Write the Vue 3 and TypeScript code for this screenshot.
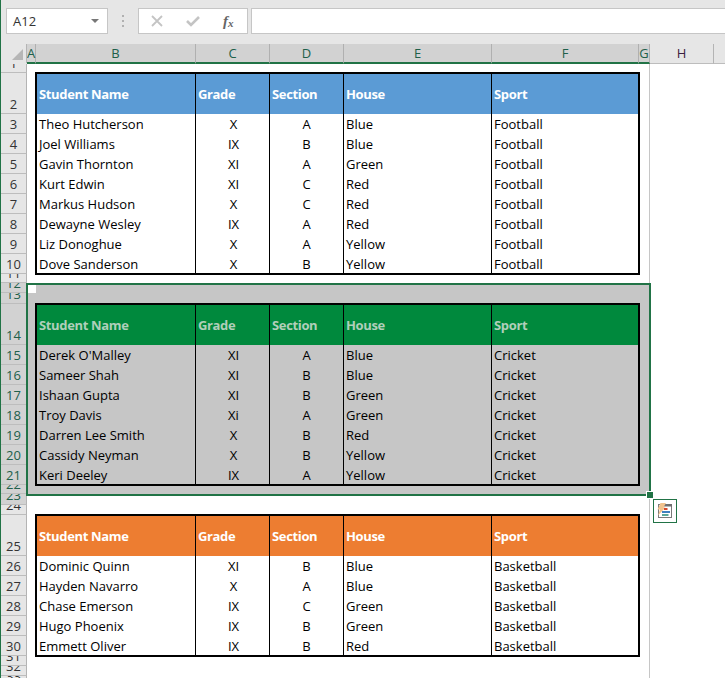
<script setup lang="ts">
interface Row { name: string; grade: string; section: string; house: string; sport: string }
const mk = (sport: string, rows: string[][]): Row[] =>
  rows.map(([name, grade, section, house]) => ({ name, grade, section, house, sport }))

const football = mk('Football', [
  ['Theo Hutcherson', 'X', 'A', 'Blue'],
  ['Joel Williams', 'IX', 'B', 'Blue'],
  ['Gavin Thornton', 'XI', 'A', 'Green'],
  ['Kurt Edwin', 'XI', 'C', 'Red'],
  ['Markus Hudson', 'X', 'C', 'Red'],
  ['Dewayne Wesley', 'IX', 'A', 'Red'],
  ['Liz Donoghue', 'X', 'A', 'Yellow'],
  ['Dove Sanderson', 'X', 'B', 'Yellow'],
])
const cricket = mk('Cricket', [
  ["Derek O'Malley", 'XI', 'A', 'Blue'],
  ['Sameer Shah', 'XI', 'B', 'Blue'],
  ['Ishaan Gupta', 'XI', 'B', 'Green'],
  ['Troy Davis', 'Xi', 'A', 'Green'],
  ['Darren Lee Smith', 'X', 'B', 'Red'],
  ['Cassidy Neyman', 'X', 'B', 'Yellow'],
  ['Keri Deeley', 'IX', 'A', 'Yellow'],
])
const basketball = mk('Basketball', [
  ['Dominic Quinn', 'XI', 'B', 'Blue'],
  ['Hayden Navarro', 'X', 'A', 'Blue'],
  ['Chase Emerson', 'IX', 'C', 'Green'],
  ['Hugo Phoenix', 'IX', 'B', 'Green'],
  ['Emmett Oliver', 'IX', 'B', 'Red'],
])
const headers = ['Student Name', 'Grade', 'Section', 'House', 'Sport']

const rowHeights: [number, number][] = [
  [1, 9], [2, 41], [3, 20], [4, 20], [5, 20], [6, 20], [7, 20], [8, 20], [9, 20], [10, 20],
  [11, 9], [12, 10], [13, 11], [14, 41], [15, 20], [16, 20], [17, 20], [18, 20], [19, 20], [20, 20], [21, 20],
  [22, 9], [23, 11], [24, 10], [25, 41], [26, 20], [27, 20], [28, 20], [29, 20], [30, 20],
  [31, 10], [32, 10], [33, 10],
]
const columns = [
  { l: 'A', w: 9, on: true }, { l: 'B', w: 160, on: true }, { l: 'C', w: 74, on: true },
  { l: 'D', w: 74, on: true }, { l: 'E', w: 148, on: true }, { l: 'F', w: 147, on: true },
  { l: 'G', w: 11, on: true }, { l: 'H', w: 64, on: false }, { l: '', w: 20, on: false },
]
const isSel = (n: number) => n >= 12 && n <= 23
</script>

<template>
  <div class="app">
    <div class="toolbar">
      <div class="namebox"><span>A12</span><i class="caret"></i></div>
      <div class="grip"><b></b><b></b><b></b></div>
      <div class="fxbtns">
        <svg width="12" height="12" viewBox="0 0 12 12"><path d="M1 1 L11 11 M11 1 L1 11" stroke="#c4c4c4" stroke-width="1.8" fill="none"/></svg>
        <svg width="14" height="12" viewBox="0 0 14 12"><path d="M1 6 L5 10 L13 2" stroke="#c4c4c4" stroke-width="2.6" fill="none"/></svg>
        <span class="fx">f<sub>x</sub></span>
      </div>
      <div class="formula"></div>
    </div>
    <div class="colhead">
      <div class="corner"><i></i></div>
      <div v-for="c in columns" :key="c.l" class="col" :class="{ on: c.on }" :style="{ width: c.w + 'px' }">{{ c.l }}</div>
    </div>
    <div class="body">
      <div class="rowhead">
        <div v-for="[n, h] in rowHeights" :key="n" class="rh" :class="{ sel: isSel(n) }" :style="{ height: h + 'px' }">{{ n }}</div>
      </div>
      <div class="sheet">
        <section class="zone zone-top">
          <div class="tbl block-blue">
            <div class="tr head"><span v-for="h in headers" :key="h">{{ h }}</span></div>
            <div v-for="r in football" :key="r.name" class="tr"><span>{{ r.name }}</span><span class="c">{{ r.grade }}</span><span class="c">{{ r.section }}</span><span>{{ r.house }}</span><span>{{ r.sport }}</span></div>
          </div>
        </section>
        <section class="zone zone-sel">
          <i class="active"></i>
          <div class="tbl block-green">
            <div class="tr head"><span v-for="h in headers" :key="h">{{ h }}</span></div>
            <div v-for="r in cricket" :key="r.name" class="tr"><span>{{ r.name }}</span><span class="c">{{ r.grade }}</span><span class="c">{{ r.section }}</span><span>{{ r.house }}</span><span>{{ r.sport }}</span></div>
          </div>
          <i class="handle"></i>
          <div class="flash">
            <svg width="22" height="22" viewBox="654 500 22 22">
              <rect x="658.5" y="504.5" width="13" height="13" fill="#fff" stroke="#7a7a7a" stroke-width="1"/>
              <rect x="662" y="504" width="10" height="2.5" fill="#6f6f6f"/>
              <path d="M660.5 503 H666 L663.5 507.5 H665.5 L658 515.5 L660 509.5 H657.5 Z" fill="#f2c28c"/>
              <rect x="664" y="508" width="3.5" height="2" fill="#d8492c"/>
              <rect x="662" y="511" width="8" height="2" fill="#3f7fc0"/>
              <rect x="662" y="514" width="6.5" height="2" fill="#5aa79a"/>
            </svg>
          </div>
        </section>
        <section class="zone zone-bot">
          <div class="tbl block-orange">
            <div class="tr head"><span v-for="h in headers" :key="h">{{ h }}</span></div>
            <div v-for="r in basketball" :key="r.name" class="tr"><span>{{ r.name }}</span><span class="c">{{ r.grade }}</span><span class="c">{{ r.section }}</span><span>{{ r.house }}</span><span>{{ r.sport }}</span></div>
          </div>
        </section>
      </div>
    </div>
  </div>
</template>

<style>
html, body { margin: 0; background: #fff; overflow: hidden; }
</style>

<style scoped>
.app {
  width: 725px;
  height: 678px;
  overflow: hidden;
  box-sizing: border-box;
  border-left: 1px solid #217346;
  font-family: "Open Sans", "Noto Sans", sans-serif;
  color: #000;
  background: #fff;
}
.toolbar {
  height: 44px;
  box-sizing: border-box;
  background: #e6e6e6;
  display: flex;
  align-items: flex-start;
  padding-top: 8px;
  padding-left: 5px;
}
.namebox {
  width: 102px;
  height: 26px;
  box-sizing: border-box;
  background: #fff;
  border: 1px solid #c6c6c6;
  display: flex;
  align-items: center;
  justify-content: space-between;
  padding: 0 8px 0 6px;
  font-size: 13px;
  color: #333;
}
.caret { width: 0; height: 0; border-left: 4px solid transparent; border-right: 4px solid transparent; border-top: 4px solid #777; }
.grip { width: 30px; display: flex; flex-direction: column; align-items: center; gap: 3px; padding-top: 7px; }
.grip b { width: 2px; height: 2px; background: #b0b0b0; display: block; }
.fxbtns {
  width: 110px;
  height: 26px;
  box-sizing: border-box;
  background: #fff;
  border: 1px solid #c6c6c6;
  display: flex;
  align-items: center;
  gap: 23px;
  padding-left: 12px;
}
.fx { font-family: "Liberation Serif", serif; font-style: italic; font-size: 15px; font-weight: bold; color: #666; }
.fx sub { font-size: 11px; vertical-align: -1px; line-height: 0; }
.formula {
  flex: 1;
  height: 26px;
  margin-left: 3px;
  box-sizing: border-box;
  background: #fff;
  border: 1px solid #c6c6c6;
  border-right: 0;
}
.colhead {
  height: 20px;
  box-sizing: border-box;
  display: flex;
  background: #e6e6e6;
}
.corner {
  width: 26px;
  flex: none;
  height: 19px;
  position: relative;
  box-sizing: border-box;
  border-right: 1px solid #b4b4b4;
}
.corner i {
  position: absolute;
  right: 3px;
  bottom: 3px;
  border-left: 11px solid transparent;
  border-bottom: 11px solid #b6b6b6;
}
.col {
  flex: none;
  box-sizing: border-box;
  height: 20px;
  border-right: 1px solid #b4b4b4;
  border-bottom: 1px solid #bdbdbd;
  font-size: 13px;
  line-height: 18px;
  text-align: center;
  color: #3a2040;
}
.col.on {
  background: #d2d2d2;
  color: #20604a;
  border-bottom: 2px solid #217346;
  border-right-color: #b0b0b0;
}
.body { display: flex; }
.rowhead { width: 26px; flex: none; background: #e6e6e6; }
.rh {
  box-sizing: border-box;
  border-bottom: 1px solid #bdbdbd;
  border-right: 1px solid #b4b4b4;
  font-size: 13px;
  line-height: 17px;
  text-align: center;
  display: flex;
  align-items: flex-end;
  justify-content: center;
  overflow: hidden;
  color: #333;
}
.rh.sel { background: #d2d2d2; color: #20604a; }
.sheet { width: 622px; flex: none; box-sizing: content-box; border-right: 1px solid #c6c6c6; height: 640px; }
.zone { box-sizing: border-box; padding-left: 8px; position: relative; }
.zone-top { height: 219px; padding-top: 8px; }
.zone-sel {
  height: 213px;
  padding-top: 18px;
  padding-left: 7px;
  background: #c6c6c6;
  border: 2px solid #217346;
  margin-left: -1px;
  width: 625px;
}
.zone-bot { padding-top: 18px; }
.active { position: absolute; left: 0; top: 0; width: 8px; height: 8px; background: #fff; }
.handle {
  position: absolute;
  right: -5px;
  bottom: -5px;
  width: 6px;
  height: 6px;
  background: #217346;
  border: 1px solid #fff;
}
.flash {
  position: absolute;
  left: 625px;
  top: 214px;
  width: 24px;
  height: 24px;
  box-sizing: border-box;
  border: 1px solid #217346;
  background: #fff;
  display: flex;
  align-items: center;
  justify-content: center;
}
.tbl {
  width: 605px;
  box-sizing: border-box;
  border: 2px solid #000;
  font-size: 13px;
}
.tr {
  display: grid;
  grid-template-columns: 159px 74px 74px 148px 146px;
  height: 20px;
  line-height: 20px;
}
.tr:last-child { height: 19px; }
.tr span { padding-left: 2px; box-sizing: border-box; border-right: 1px solid #000; white-space: nowrap; overflow: hidden; }
.tr span:last-child { border-right: 0; }
.tr span.c { text-align: center; padding-left: 0; }
.tr span.c:nth-child(2) { padding-left: 2px; }
.head { height: 40px; line-height: 40px; font-weight: 700; letter-spacing: -0.35px; }
.head span:first-child { padding-left: 2px; }
.block-blue .head { background: #5b9bd5; color: #fff; }
.block-green .head { background: #00893d; color: #b0cfba; }
.block-orange .head { background: #ed7d31; color: #fff; }
</style>
